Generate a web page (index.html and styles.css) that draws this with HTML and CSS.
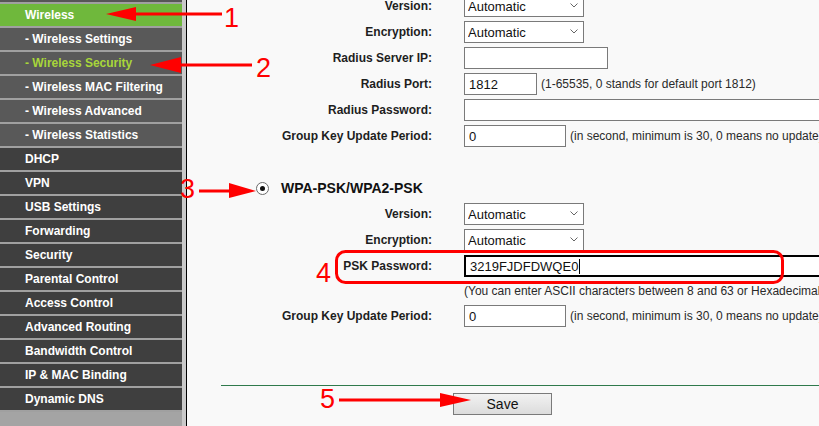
FILE: index.html
```html
<!DOCTYPE html>
<html lang="en">
<head>
<meta charset="utf-8">
<title>Wireless Security</title>
<link rel="stylesheet" href="styles.css">
</head>
<body>
<div class="page">
  <nav class="sidebar">
    <ul class="menu">
      <li class="item filler"></li>
      <li class="item active">Wireless</li>
      <li class="item sub">- Wireless Settings</li>
      <li class="item sub current">- Wireless Security</li>
      <li class="item sub">- Wireless MAC Filtering</li>
      <li class="item sub">- Wireless Advanced</li>
      <li class="item sub">- Wireless Statistics</li>
      <li class="item">DHCP</li>
      <li class="item">VPN</li>
      <li class="item">USB Settings</li>
      <li class="item">Forwarding</li>
      <li class="item">Security</li>
      <li class="item">Parental Control</li>
      <li class="item">Access Control</li>
      <li class="item">Advanced Routing</li>
      <li class="item">Bandwidth Control</li>
      <li class="item">IP &amp; MAC Binding</li>
      <li class="item">Dynamic DNS</li>
    </ul>
  </nav>
  <main class="content">
    <form class="form">
      <div class="row">
        <label class="label">Version:</label>
        <div class="field"><div class="select-wrap"><select class="select"><option>Automatic</option></select><svg class="chev" width="8" height="5" viewBox="0 0 8 5"><path d="M0.5 0.5 L4 4 L7.5 0.5" fill="none" stroke="#666" stroke-width="1"/></svg></div></div>
      </div>
      <div class="row">
        <label class="label">Encryption:</label>
        <div class="field"><div class="select-wrap"><select class="select"><option>Automatic</option></select><svg class="chev" width="8" height="5" viewBox="0 0 8 5"><path d="M0.5 0.5 L4 4 L7.5 0.5" fill="none" stroke="#666" stroke-width="1"/></svg></div></div>
      </div>
      <div class="row">
        <label class="label">Radius Server IP:</label>
        <div class="field"><input class="input w-ip" type="text" value=""></div>
      </div>
      <div class="row">
        <label class="label">Radius Port:</label>
        <div class="field"><input class="input w-port" type="text" value="1812"><span class="help">(1-65535, 0 stands for default port 1812)</span></div>
      </div>
      <div class="row">
        <label class="label">Radius Password:</label>
        <div class="field"><input class="input w-long" type="text" value=""></div>
      </div>
      <div class="row">
        <label class="label">Group Key Update Period:</label>
        <div class="field"><input class="input w-group" type="text" value="0"><span class="help">(in second, minimum is 30, 0 means no update)</span></div>
      </div>

      <div class="radio-row">
        <span class="radio"><span class="radio-dot"></span></span>
        <span class="radio-label">WPA-PSK/WPA2-PSK</span>
      </div>
      <div class="row">
        <label class="label">Version:</label>
        <div class="field"><div class="select-wrap"><select class="select"><option>Automatic</option></select><svg class="chev" width="8" height="5" viewBox="0 0 8 5"><path d="M0.5 0.5 L4 4 L7.5 0.5" fill="none" stroke="#666" stroke-width="1"/></svg></div></div>
      </div>
      <div class="row">
        <label class="label">Encryption:</label>
        <div class="field"><div class="select-wrap"><select class="select"><option>Automatic</option></select><svg class="chev" width="8" height="5" viewBox="0 0 8 5"><path d="M0.5 0.5 L4 4 L7.5 0.5" fill="none" stroke="#666" stroke-width="1"/></svg></div></div>
      </div>
      <div class="row">
        <label class="label">PSK Password:</label>
        <div class="field"><div class="psk-field"><span>3219FJDFDWQE0</span><span class="caret"></span></div></div>
      </div>
      <div class="row help-row">
        <span></span>
        <span class="help">(You can enter ASCII characters between 8 and 63 or Hexadecimal characters between 8 and 64.)</span>
      </div>
      <div class="row">
        <label class="label">Group Key Update Period:</label>
        <div class="field"><input class="input w-group" type="text" value="0"><span class="help">(in second, minimum is 30, 0 means no update)</span></div>
      </div>

      <hr class="rule">
      <div class="actions"><button class="btn" type="button">Save</button></div>
    </form>
  </main>

  <svg class="annotations" width="819" height="426" viewBox="0 0 819 426">
    <g fill="#f00" stroke="none">
      <rect x="132" y="12.5" width="90" height="3"/>
      <polygon points="106,14 136,7 136,21"/>
      <rect x="178" y="63.5" width="74" height="3"/>
      <polygon points="150,65 181,57 181,73"/>
      <rect x="199" y="189.5" width="33" height="3"/>
      <polygon points="256,191 229,183 229,198"/>
      <rect x="339" y="398.5" width="104" height="3"/>
      <polygon points="471,400 440,393 440,407"/>
    </g>
    <rect x="336.5" y="251.5" width="446" height="31" rx="9" ry="9" fill="none" stroke="#f00" stroke-width="3"/>
    <g class="nums" fill="#f00">
      <text x="224" y="27">1</text>
      <text x="256" y="77">2</text>
      <text x="180" y="198">3</text>
      <text x="316" y="282">4</text>
      <text x="320" y="408">5</text>
    </g>
  </svg>
</div>
</body>
</html>
```

FILE: styles.css
```css
* { box-sizing: border-box; }

html, body {
  margin: 0;
  padding: 0;
  background: #f9f9f9;
}

body {
  font-family: "Liberation Sans", Arial, sans-serif;
  color: #1e1e1e;
}

.page {
  position: relative;
  display: flex;
  width: 819px;
  height: 426px;
  overflow: hidden;
}

/* ---------- sidebar ---------- */
.sidebar {
  flex: 0 0 186px;
  background: #a4a4a4;
  border-right: 4px solid #c9c9c9;
}

.menu {
  list-style: none;
  margin: 0;
  padding: 0;
}

.item {
  height: 24px;
  line-height: 22px;
  padding-left: 25px;
  border-bottom: 2px solid #a0a0a0;
  background: #3f3f3f;
  color: #ffffff;
  font-size: 12px;
  font-weight: bold;
  white-space: nowrap;
}

.item.filler {
  height: 4px;
  background: #565656;
}

.item.active {
  background: #6fb83c;
}

.item.sub {
  background: #595959;
}

.item.sub.current {
  color: #a8d63a;
}

/* ---------- content ---------- */
.content {
  flex: 1 1 auto;
  border-left: 1px solid #000;
  background: #f9f9f9;
  overflow: hidden;
  min-width: 0;
}

.form {
  margin: -5px 0 0 0;
  display: flex;
  flex-direction: column;
}

.row {
  display: grid;
  grid-template-columns: 245px 1fr;
  column-gap: 32px;
  align-items: center;
  height: 22px;
  margin-bottom: 4px;
}

.label {
  text-align: right;
  font-size: 12px;
  font-weight: bold;
  color: #1e1e1e;
  white-space: nowrap;
}

.field {
  display: flex;
  align-items: center;
  gap: 4px;
  white-space: nowrap;
}

.help {
  font-size: 12px;
  color: #2a2a2a;
  white-space: nowrap;
}

.input,
.select {
  height: 22px;
  margin: 0;
  padding: 0 4px;
  border: 1px solid #7a7a7a;
  border-radius: 0;
  background: #ffffff;
  font-family: "Liberation Sans", Arial, sans-serif;
  font-size: 13px;
  color: #111;
  flex: 0 0 auto;
}

.w-ip { width: 144px; }
.w-port { width: 73px; }
.w-group { width: 102px; }
.w-long { width: 420px; }

.select-wrap {
  position: relative;
  width: 120px;
  height: 22px;
}

.select {
  -webkit-appearance: none;
  appearance: none;
  width: 120px;
  padding-left: 3px;
}

.chev {
  position: absolute;
  right: 6px;
  top: 8px;
  pointer-events: none;
}

.radio-row {
  display: flex;
  align-items: center;
  gap: 12px;
  height: 22px;
  margin: 26px 0 4px 0;
  padding-left: 69px;
}

.radio {
  width: 13px;
  height: 13px;
  border: 1px solid #6a6a6a;
  border-radius: 50%;
  background: #fff;
  display: flex;
  align-items: center;
  justify-content: center;
}

.radio-dot {
  width: 5px;
  height: 5px;
  border-radius: 50%;
  background: #111;
}

.radio-label {
  font-size: 14px;
  font-weight: bold;
  color: #111;
  white-space: nowrap;
}

.psk-field {
  display: flex;
  align-items: center;
  width: 420px;
  height: 22px;
  padding-left: 4px;
  border: 2px solid #000;
  background: #fff;
  font-size: 13px;
  color: #111;
}

.caret {
  display: inline-block;
  width: 1px;
  height: 15px;
  margin-left: 1px;
  background: #000;
}

.help-row {
  height: 20px;
}

.rule {
  margin: 54px 0 0 34px;
  border: 0;
  border-top: 1px solid #2f7a4c;
  height: 0;
}

.actions {
  padding-left: 266px;
  margin-top: 7px;
}

.btn {
  width: 99px;
  height: 22px;
  margin: 0;
  border: 1px solid #7a7a7a;
  border-radius: 0;
  background: linear-gradient(#f2f2f2, #dcdcdc);
  font-family: "Liberation Sans", Arial, sans-serif;
  font-size: 14px;
  color: #111;
}

/* ---------- annotations ---------- */
.annotations {
  position: absolute;
  top: 0;
  left: 0;
  pointer-events: none;
}

.nums text {
  font-family: "Liberation Sans", Arial, sans-serif;
  font-size: 27px;
}
```
